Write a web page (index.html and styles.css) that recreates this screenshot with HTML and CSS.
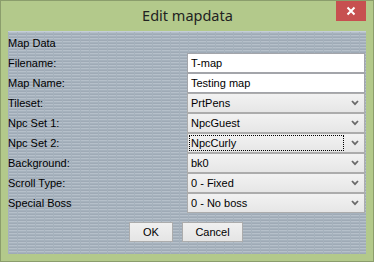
FILE: index.html
```html
<!DOCTYPE html>
<html>
<head>
<meta charset="utf-8">
<link rel="stylesheet" href="styles.css">
</head>
<body>
<div class="window">
  <div class="titlebar">
    <div class="title">Edit mapdata</div>
    <div class="close"><svg width="10" height="10" viewBox="0 0 10 10"><path d="M1.5 1.5 L8.5 8.5 M8.5 1.5 L1.5 8.5" stroke="#fff" stroke-width="2" fill="none"/></svg></div>
  </div>
  <div class="content">
    <div class="row"><div class="label">Map Data</div></div>
    <div class="row"><div class="label">Filename:</div><div class="field text">T-map</div></div>
    <div class="row"><div class="label">Map Name:</div><div class="field text">Testing map</div></div>
    <div class="row"><div class="label">Tileset:</div><div class="field combo"><span class="val">PrtPens</span><svg class="chev" width="8" height="6" viewBox="0 0 8 6"><path d="M1 1 L4 4.2 L7 1" stroke="#6a6a6a" stroke-width="1.8" fill="none"/></svg></div></div>
    <div class="row"><div class="label">Npc Set 1:</div><div class="field combo"><span class="val">NpcGuest</span><svg class="chev" width="8" height="6" viewBox="0 0 8 6"><path d="M1 1 L4 4.2 L7 1" stroke="#6a6a6a" stroke-width="1.8" fill="none"/></svg></div></div>
    <div class="row"><div class="label">Npc Set 2:</div><div class="field combo"><span class="val focus">NpcCurly</span><svg class="chev" width="8" height="6" viewBox="0 0 8 6"><path d="M1 1 L4 4.2 L7 1" stroke="#6a6a6a" stroke-width="1.8" fill="none"/></svg></div></div>
    <div class="row"><div class="label">Background:</div><div class="field combo"><span class="val">bk0</span><svg class="chev" width="8" height="6" viewBox="0 0 8 6"><path d="M1 1 L4 4.2 L7 1" stroke="#6a6a6a" stroke-width="1.8" fill="none"/></svg></div></div>
    <div class="row"><div class="label">Scroll Type:</div><div class="field combo"><span class="val">0 - Fixed</span><svg class="chev" width="8" height="6" viewBox="0 0 8 6"><path d="M1 1 L4 4.2 L7 1" stroke="#6a6a6a" stroke-width="1.8" fill="none"/></svg></div></div>
    <div class="row"><div class="label">Special Boss</div><div class="field combo"><span class="val">0 - No boss</span><svg class="chev" width="8" height="6" viewBox="0 0 8 6"><path d="M1 1 L4 4.2 L7 1" stroke="#6a6a6a" stroke-width="1.8" fill="none"/></svg></div></div>
    <div class="buttons">
      <div class="btn ok">OK</div>
      <div class="btn cancel">Cancel</div>
    </div>
  </div>
</div>
</body>
</html>
```
FILE: styles.css
```css
html, body {
  margin: 0;
  padding: 0;
  background: #b3c98b;
}
.window {
  width: 374px;
  height: 262px;
  box-sizing: border-box;
  border: 1px solid #8b9d6c;
  background: #b3c98b;
  padding: 0 7px 7px 7px;
  display: flex;
  flex-direction: column;
  font-family: "Liberation Sans", Arial, sans-serif;
  font-size: 11px;
  color: #000;
}
.titlebar {
  height: 30px;
  display: grid;
  grid-template-columns: 1fr auto 1fr;
  align-items: start;
}
.title {
  grid-column: 2;
  font-family: "Noto Sans", "Open Sans", sans-serif;
  font-size: 14.5px;
  color: #222;
  padding-top: 4px;
  line-height: 20px;
  padding-left: 1px;
}
.close {
  grid-column: 3;
  justify-self: end;
  width: 30px;
  height: 20px;
  background: #c75050;
  display: flex;
  align-items: center;
  justify-content: center;
}
.content {
  flex: 1;
  background-color: #a6b2bd;
  background-image:
    linear-gradient(to right, #a6b2bd 0 1px, transparent 1px),
    repeating-linear-gradient(to bottom, #b6c0ca 0 1px, #a6b2bd 1px 2px, #9faab6 2px 3px);
  background-size: 9px 3px, auto;
  border-top: 1px solid #c4ced8;
  padding: 1px 1px 0 0;
  display: flex;
  flex-direction: column;
}
.row {
  height: 20px;
  display: flex;
  align-items: center;
}
.label {
  width: 179px;
  flex: none;
  line-height: 20px;
}
.field {
  flex: 1;
  height: 20px;
  box-sizing: border-box;
  display: flex;
  align-items: center;
  padding-left: 3px;
  line-height: 14px;
}
.text {
  background: #fff;
  border: 1px solid #a3a5aa;
}
.combo {
  background: linear-gradient(to bottom, #f2f2f2, #e6e6e6);
  border: 1px solid #acacac;
  justify-content: space-between;
  padding-right: 5px;
}
.val {
  display: block;
  padding: 0 1px;
  margin-left: -1px;
}
.val.focus {
  outline: 1px dotted #000;
  outline-offset: 0;
  width: 153px;
  box-sizing: border-box;
}
.chev {
  flex: none;
}
.buttons {
  display: flex;
  gap: 9px;
  padding-left: 121px;
  margin-top: 9px;
}
.btn {
  height: 20px;
  box-sizing: border-box;
  border: 1px solid #acacac;
  background: linear-gradient(to bottom, #f0f0f0, #e5e5e5);
  display: flex;
  align-items: center;
  justify-content: center;
}
.ok { width: 44px; }
.cancel { width: 61px; }
```
